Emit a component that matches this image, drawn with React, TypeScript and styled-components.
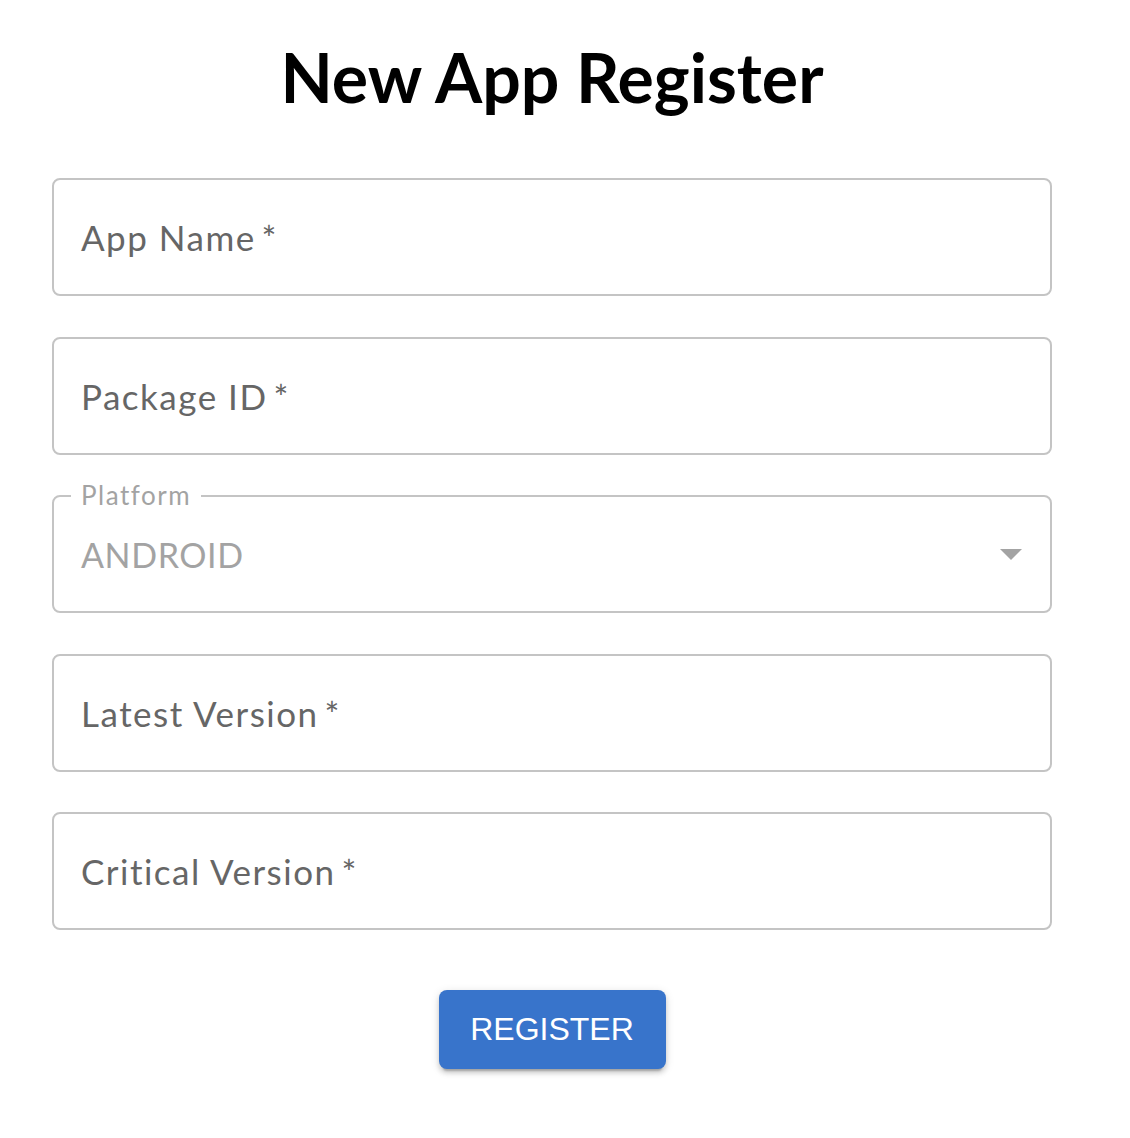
import React from "react";
import styled, { createGlobalStyle } from "styled-components";

const Global = createGlobalStyle`
  html, body { margin: 0; padding: 0; background: #ffffff; }
  body { font-family: "Lato", "Noto Sans", sans-serif; }
`;

const Page = styled.main`
  display: flex;
  flex-direction: column;
  align-items: center;
  width: 1000px;
  padding: 43px 0 60px 52px;
`;

const Title = styled.h1`
  margin: 0 0 67px;
  font-family: "Lato", sans-serif;
  font-weight: 700;
  font-size: 68px;
  line-height: 68px;
  color: #000;
  letter-spacing: 0;
`;

const Form = styled.form`
  display: flex;
  flex-direction: column;
  gap: 40.5px;
  width: 100%;
`;

const Field = styled.div`
  position: relative;
  box-sizing: border-box;
  height: 118px;
  border: 2px solid #c4c4c4;
  border-radius: 8px;
  display: flex;
  align-items: center;
  justify-content: space-between;
  padding: 0 28px 0 27px;
`;

const Label = styled.span`
  font-family: "Lato", sans-serif;
  font-size: 35px;
  font-weight: 400;
  color: #666666;
  letter-spacing: 1.5px;
`;

const Value = styled.span`
  font-family: "Lato", sans-serif;
  font-size: 34px;
  font-weight: 400;
  color: #a3a3a3;
  letter-spacing: 0.6px;
`;

const Floating = styled.span`
  position: absolute;
  top: -17px;
  left: 17px;
  padding: 0 10px;
  background: #fff;
  font-family: "Lato", sans-serif;
  font-size: 26px;
  line-height: 30px;
  color: #a3a3a3;
  letter-spacing: 1.5px;
`;

const Arrow = styled.svg`
  width: 22px;
  height: 11px;
  display: block;
`;

const Button = styled.button`
  margin-top: 60px;
  width: 227px;
  height: 79px;
  border: none;
  border-radius: 8px;
  background: #3874cb;
  color: #fff;
  font-family: "Liberation Sans", Arial, sans-serif;
  font-size: 32px;
  font-weight: 400;
  box-shadow: 0 6px 2px -4px rgba(0, 0, 0, 0.2), 0 4px 5px 0 rgba(0, 0, 0, 0.14),
    0 2px 10px 0 rgba(0, 0, 0, 0.12);
  cursor: pointer;
`;

const fields = ["App Name", "Package ID"];
const fields2 = ["Latest Version", "Critical Version"];

export default function App() {
  return (
    <>
      <Global />
      <Page>
        <Title>New App Register</Title>
        <Form onSubmit={(e) => e.preventDefault()}>
          {fields.map((f) => (
            <Field key={f}>
              <Label>{f}{"\u2009*"}</Label>
            </Field>
          ))}
          <Field>
            <Floating>Platform</Floating>
            <Value>ANDROID</Value>
            <Arrow viewBox="0 0 22 11">
              <path d="M0 0 L22 0 L11 11 Z" fill="#a3a3a3" />
            </Arrow>
          </Field>
          {fields2.map((f) => (
            <Field key={f}>
              <Label>{f}{"\u2009*"}</Label>
            </Field>
          ))}
        </Form>
        <Button type="button">REGISTER</Button>
      </Page>
    </>
  );
}
